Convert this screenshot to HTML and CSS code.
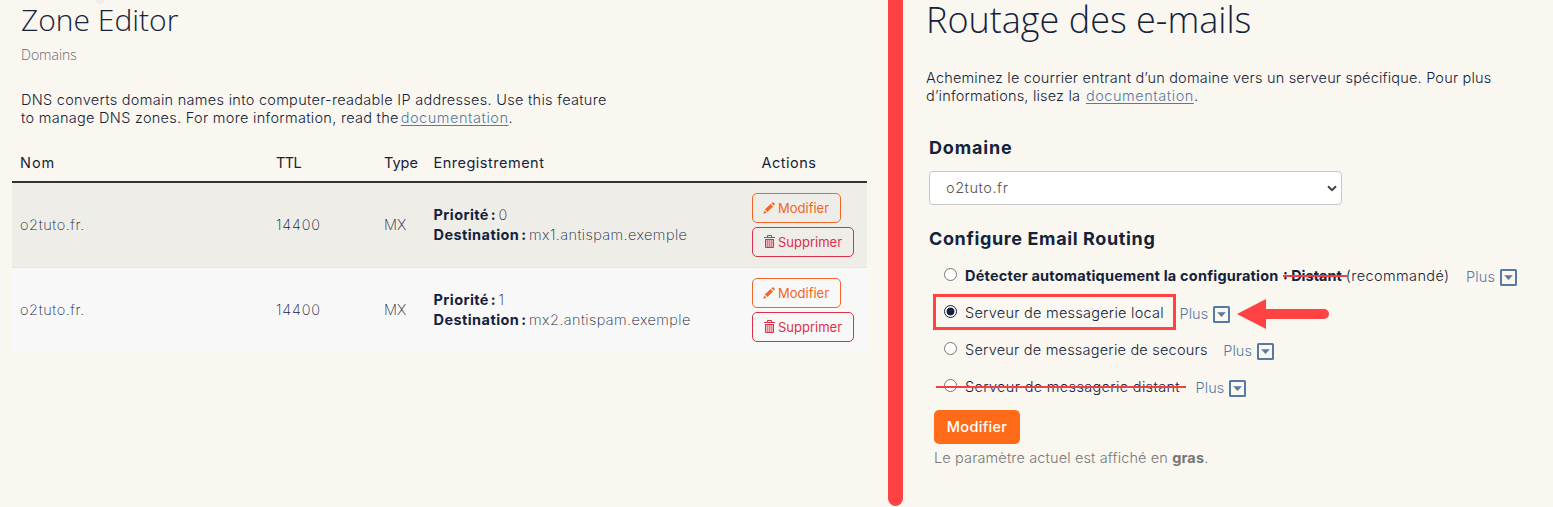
FILE: index.html
```
<!DOCTYPE html>
<html lang="fr">
<head>
<meta charset="utf-8">
<title>Zone Editor</title>
<link rel="stylesheet" href="styles.css">
</head>
<body>
<svg class="defs" aria-hidden="true">
  <symbol id="pencil" viewBox="0 0 12 12"><path d="M0.2 11.8 L1.3 8.5 L3.5 10.7Z M1.9 7.6 L7.5 2 L10 4.5 L4.4 10.1Z M8.4 1.2 L9.2.4 Q9.8 0 10.4.5 L11.5 1.6 Q12 2.2 11.6 2.8 L10.8 3.6Z"/></symbol>
  <symbol id="trash" viewBox="0 0 11 13"><path d="M1.5 4h8v8.5h-8z" fill-opacity=".3"/><path d="M3.5 2V.5h4V2M0 2.5h11M1.5 4v8.5h8V4M1 4.5h9" fill="none" stroke="currentColor"/><path d="M3.5 4v8M5.5 4v8M7.5 4v8" fill="none" stroke="currentColor" stroke-opacity=".45"/></symbol>
  <symbol id="caret" viewBox="0 0 17 17"><rect x="1" y="1" width="15" height="15" rx=".5" fill="none" stroke="currentColor" stroke-width="2"/><path d="M4.2 6.2h8.6L8.5 10.9z"/></symbol>
</svg>
<div class="page">
  <section class="zone">
    <div class="dot"></div>
    <h1 class="zone-title">Zone Editor</h1>
    <div class="crumb">Domains</div>
    <p class="intro zone-intro">DNS converts domain names into computer-readable IP addresses. Use this feature<br>to manage DNS zones. For more information, read the <a href="#">documentation</a>.</p>
    <div class="table">
      <div class="row head"><span class="h-nom">Nom</span><span class="h-ttl">TTL</span><span class="h-type">Type</span><span>Enregistrement</span><span class="act">Actions</span></div>
      <div class="row odd">
        <span>o2tuto.fr.</span><span class="ttl">14400</span><span class="type">MX</span>
        <div class="record"><div><b>Priorité :</b> 0</div><div><b>Destination :</b> mx1.antispam.exemple</div></div>
        <div class="buttons"><button class="btn edit"><svg class="i-pencil"><use href="#pencil"/></svg><span>Modifier</span></button><button class="btn del"><svg class="i-trash"><use href="#trash"/></svg><span>Supprimer</span></button></div>
      </div>
      <div class="row even">
        <span>o2tuto.fr.</span><span class="ttl">14400</span><span class="type">MX</span>
        <div class="record"><div><b>Priorité :</b> 1</div><div><b>Destination :</b> mx2.antispam.exemple</div></div>
        <div class="buttons"><button class="btn edit"><svg class="i-pencil"><use href="#pencil"/></svg><span>Modifier</span></button><button class="btn del"><svg class="i-trash"><use href="#trash"/></svg><span>Supprimer</span></button></div>
      </div>
    </div>
  </section>
  <div class="divider"></div>
  <section class="routing">
    <h1 class="routing-title">Routage des e-mails</h1>
    <p class="intro routing-intro">Acheminez le courrier entrant d’un domaine vers un serveur spécifique. Pour plus<br>d’informations, lisez la <a href="#">documentation</a>.</p>
    <h2 class="domain-label">Domaine</h2>
    <div class="select"><span>o2tuto.fr</span><svg class="chev" viewBox="0 0 10 7"><path d="M1 1.2l4 4 4-4" fill="none" stroke="#444" stroke-width="2"/></svg></div>
    <h2 class="config-label">Configure Email Routing</h2>
    <div class="options">
      <div class="option auto"><span class="radio"></span><label><b>Détecter automatiquement la configuration</b> <b class="struck short">: Distant</b></label><em>(recommandé)</em><span class="plus">Plus</span><svg class="caret"><use href="#caret"/></svg></div>
      <div class="option boxed"><span class="radio on"></span><label>Serveur de messagerie local</label><span class="plus">Plus</span><svg class="caret"><use href="#caret"/></svg><svg class="arrow" viewBox="0 0 92 30"><path d="M0 15L29 0V10H87a5 5 0 0 1 0 10H29V30z"/></svg></div>
      <div class="option backup"><span class="radio"></span><label>Serveur de messagerie de secours</label><span class="plus">Plus</span><svg class="caret"><use href="#caret"/></svg></div>
      <div class="option struck long"><span class="radio"></span><label>Serveur de messagerie distant</label><span class="plus">Plus</span><svg class="caret"><use href="#caret"/></svg></div>
    </div>
    <button class="submit">Modifier</button>
    <p class="help">Le paramètre actuel est affiché en <b>gras</b>.</p>
  </section>
</div>
</body>
</html>
```
FILE: styles.css
```
*, *::before, *::after { box-sizing: border-box; }
body { margin: 0; background: #faf7f0; color: #14233b; font: 300 14.5px/18px Inter, "Liberation Sans", sans-serif; overflow: hidden; }
.defs { display: none; }
.page { display: flex; width: 1553px; height: 507px; }
h1, h2, p { margin: 0; white-space: nowrap; }
h1 { font-family: "Open Sans", sans-serif; font-weight: 300; }
em { font-style: normal; }
b { font-weight: 700; }
a { color: #557ba5; text-decoration: underline; text-underline-offset: 2px; letter-spacing: .55px; }
svg { fill: currentColor; flex: none; }

.zone { position: relative; width: 888px; padding-left: 12px; }
.dot { position: absolute; left: 96px; top: -4px; width: 8px; height: 8px; border-radius: 50%; background: #efedea; }
.zone-title { font-size: 30px; line-height: 40px; padding-left: 9px; }
.crumb { font: 300 14px/20px "Open Sans", sans-serif; color: #5f6570; padding: 5px 0 0 9px; }
.zone-intro { padding: 26px 0 0 9px; letter-spacing: .29px; }
.zone-intro a { margin-left: -2.5px; }
.table { margin-top: 17px; width: 855px; }
.row { display: grid; grid-template-columns: 256px 108px 49.5px 318.5px 1fr; padding-left: 8px; align-items: center; height: 85px; line-height: 20px; letter-spacing: .6px; font-weight: 200; }
.row.head { height: 39px; border-bottom: 2px solid #333; font-weight: 400; letter-spacing: .5px; }
.head .h-nom { letter-spacing: 1px; }
.head .h-ttl { letter-spacing: -.6px; }
.head .h-type, .type { letter-spacing: 0; }
.ttl { letter-spacing: .8px; }
.act { padding-left: 9.5px; }
.odd { background: #eeede8; border-bottom: 1px solid #e4e4e1; }
.row.even { background: #f8f8f8; height: 84px; }
.record { letter-spacing: .43px; word-spacing: -2px; }
.buttons { display: flex; flex-direction: column; align-items: flex-start; gap: 4px; }
.btn { display: flex; align-items: center; height: 30px; border: 1px solid; border-radius: 5px; background: none; font: 400 13px/18px Inter, sans-serif; padding: 0 11px 1px 10px; }
.edit { color: #f1652a; width: 89px; }
.del { color: #dc3048; width: 102px; }
.i-pencil { width: 12px; height: 12px; margin-right: 3px; }
.i-trash { width: 11px; height: 13px; margin: -1px 3px 0 1px; }

.divider { width: 15px; height: 506px; background: #ff4343; border-radius: 0 0 8px 8px; }

.routing { flex: 1; padding-left: 23px; }
.routing-title { font-size: 36px; line-height: 40px; }
.routing-intro { padding-top: 29px; letter-spacing: .19px; }
.routing-intro a { margin-left: 1.5px; }
h2 { font-size: 18px; line-height: 24px; font-weight: 700; padding-left: 3px; letter-spacing: .63px; }
.domain-label { margin-top: 31px; letter-spacing: .85px; }
.select { display: flex; justify-content: space-between; align-items: center; margin: 11px 0 0 3px; width: 413px; height: 34px; border: 1px solid #c8c8c8; border-radius: 4px; background: #fff; padding: 0 4px 0 16px; color: #555; letter-spacing: .55px; }
.chev { width: 10px; height: 7px; }
.config-label { margin-top: 22px; }
.options { padding: 6px 0 0 7px; }
.option { position: relative; display: flex; align-items: center; height: 37px; padding-left: 11px; white-space: pre; width: max-content; }
.option label { letter-spacing: .25px; }
.backup label { letter-spacing: .22px; }
.long label { letter-spacing: .33px; }
.auto label { letter-spacing: .21px; }
.option em { margin-left: 4px; letter-spacing: .4px; padding-top: 1px; }
.option .short { letter-spacing: 0; }
.radio { width: 13px; height: 13px; border: 1px solid #767676; border-radius: 50%; background: #fff; margin: -2px 8px 0 0; }
.on { border-color: #14233b; background: radial-gradient(circle, #14233b 3.6px, #fff 4.3px); }
.plus { color: #557ba5; padding-top: 3px; margin: 0 5px 0 15.5px; letter-spacing: .1px; }
.auto .plus { margin-left: 16.5px; }
.caret { width: 17px; height: 17px; margin-top: 3px; color: #557ba5; }
.arrow { width: 92px; height: 30px; margin: 2px 0 0 7px; color: #ff4343; }
.boxed::before { content: ""; position: absolute; left: 0; top: 0; width: 243px; height: 36px; border: 3px solid #ff4343; }
.struck::after { content: ""; position: absolute; height: 2px; background: #f04045; }
.short { position: relative; }
.short::after { left: 0; top: 8px; width: 64px; }
.long::after { left: 3px; top: 18px; width: 250px; }
.submit { display: block; margin: 5px 0 0 8px; width: 86px; height: 34px; border: 0; border-radius: 5px; background: #ff6c19; color: #fff; font: 500 14.5px/20px Inter, sans-serif; letter-spacing: .3px; padding: 0; }
.help { margin: 5px 0 0 8px; color: #777; letter-spacing: .13px; }
```
